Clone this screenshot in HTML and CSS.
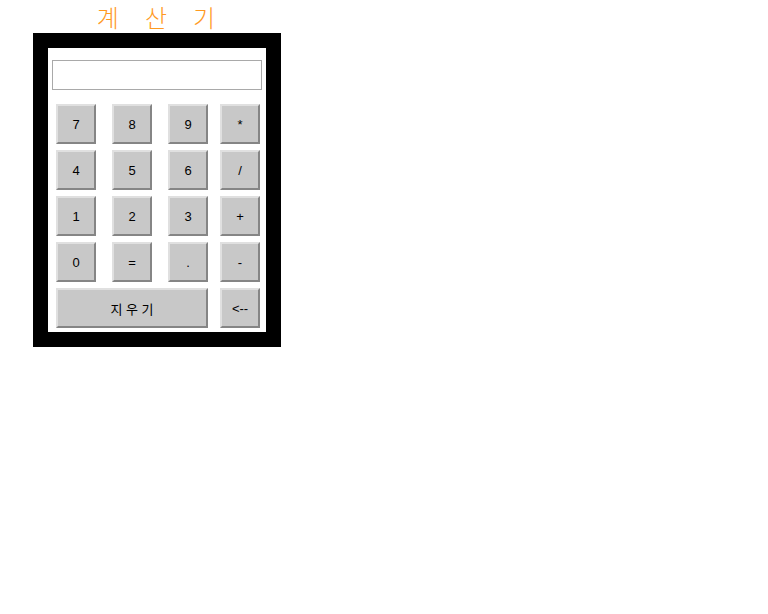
FILE: index.html
```html
<!DOCTYPE html>
<html lang="ko">
<head>
<meta charset="utf-8">
<title>계산기</title>
<link rel="stylesheet" href="styles.css">
</head>
<body>
<div class="title"><span>계</span><span>산</span><span>기</span></div>
<div class="calc">
  <input class="display" type="text">
  <div class="keys">
    <div class="row">
      <button class="key">7</button><button class="key">8</button><button class="key">9</button><button class="key op">*</button>
    </div>
    <div class="row">
      <button class="key">4</button><button class="key">5</button><button class="key">6</button><button class="key op">/</button>
    </div>
    <div class="row">
      <button class="key">1</button><button class="key">2</button><button class="key">3</button><button class="key op">+</button>
    </div>
    <div class="row">
      <button class="key">0</button><button class="key">=</button><button class="key">.</button><button class="key op">-</button>
    </div>
    <div class="row">
      <button class="key wide">지 우 기</button><button class="key op">&lt;--</button>
    </div>
  </div>
</div>
</body>
</html>
```
FILE: styles.css
```css
html, body {
  margin: 0;
  padding: 0;
  background: #fff;
}

.title {
  width: 248px;
  margin-left: 32px;
  height: 33px;
  display: flex;
  justify-content: center;
  align-items: center;
  gap: 26px;
  font-family: "Noto Sans CJK KR", sans-serif;
  font-size: 24px;
  font-weight: 300;
  line-height: 33px;
  color: #ff9a1f;
}

.calc {
  box-sizing: border-box;
  width: 248px;
  margin-left: 33px;
  border: 15px solid #000;
  background: #fff;
  padding: 12px 0 4px 0;
}

.display {
  display: block;
  box-sizing: border-box;
  width: 210px;
  height: 30px;
  margin: 0 0 0 4px;
  border: 1px solid #a9a9a9;
  padding: 0;
  background: #fff;
  outline: none;
}

.keys {
  margin-top: 14px;
  padding-left: 8px;
  display: flex;
  flex-direction: column;
  gap: 6px;
}

.row {
  display: flex;
  gap: 16px;
}

.key {
  box-sizing: border-box;
  width: 40px;
  height: 40px;
  margin: 0;
  padding: 0;
  background: #c8c8c8;
  border: 2px solid;
  border-color: #e0e0e0 #858585 #858585 #e0e0e0;
  font-family: "Liberation Sans", Arial, sans-serif;
  font-size: 13px;
  color: #000;
}

.op {
  margin-left: -4px;
}

.wide {
  width: 152px;
  font-family: "Noto Sans CJK KR", sans-serif;
  font-size: 13px;
}
```
